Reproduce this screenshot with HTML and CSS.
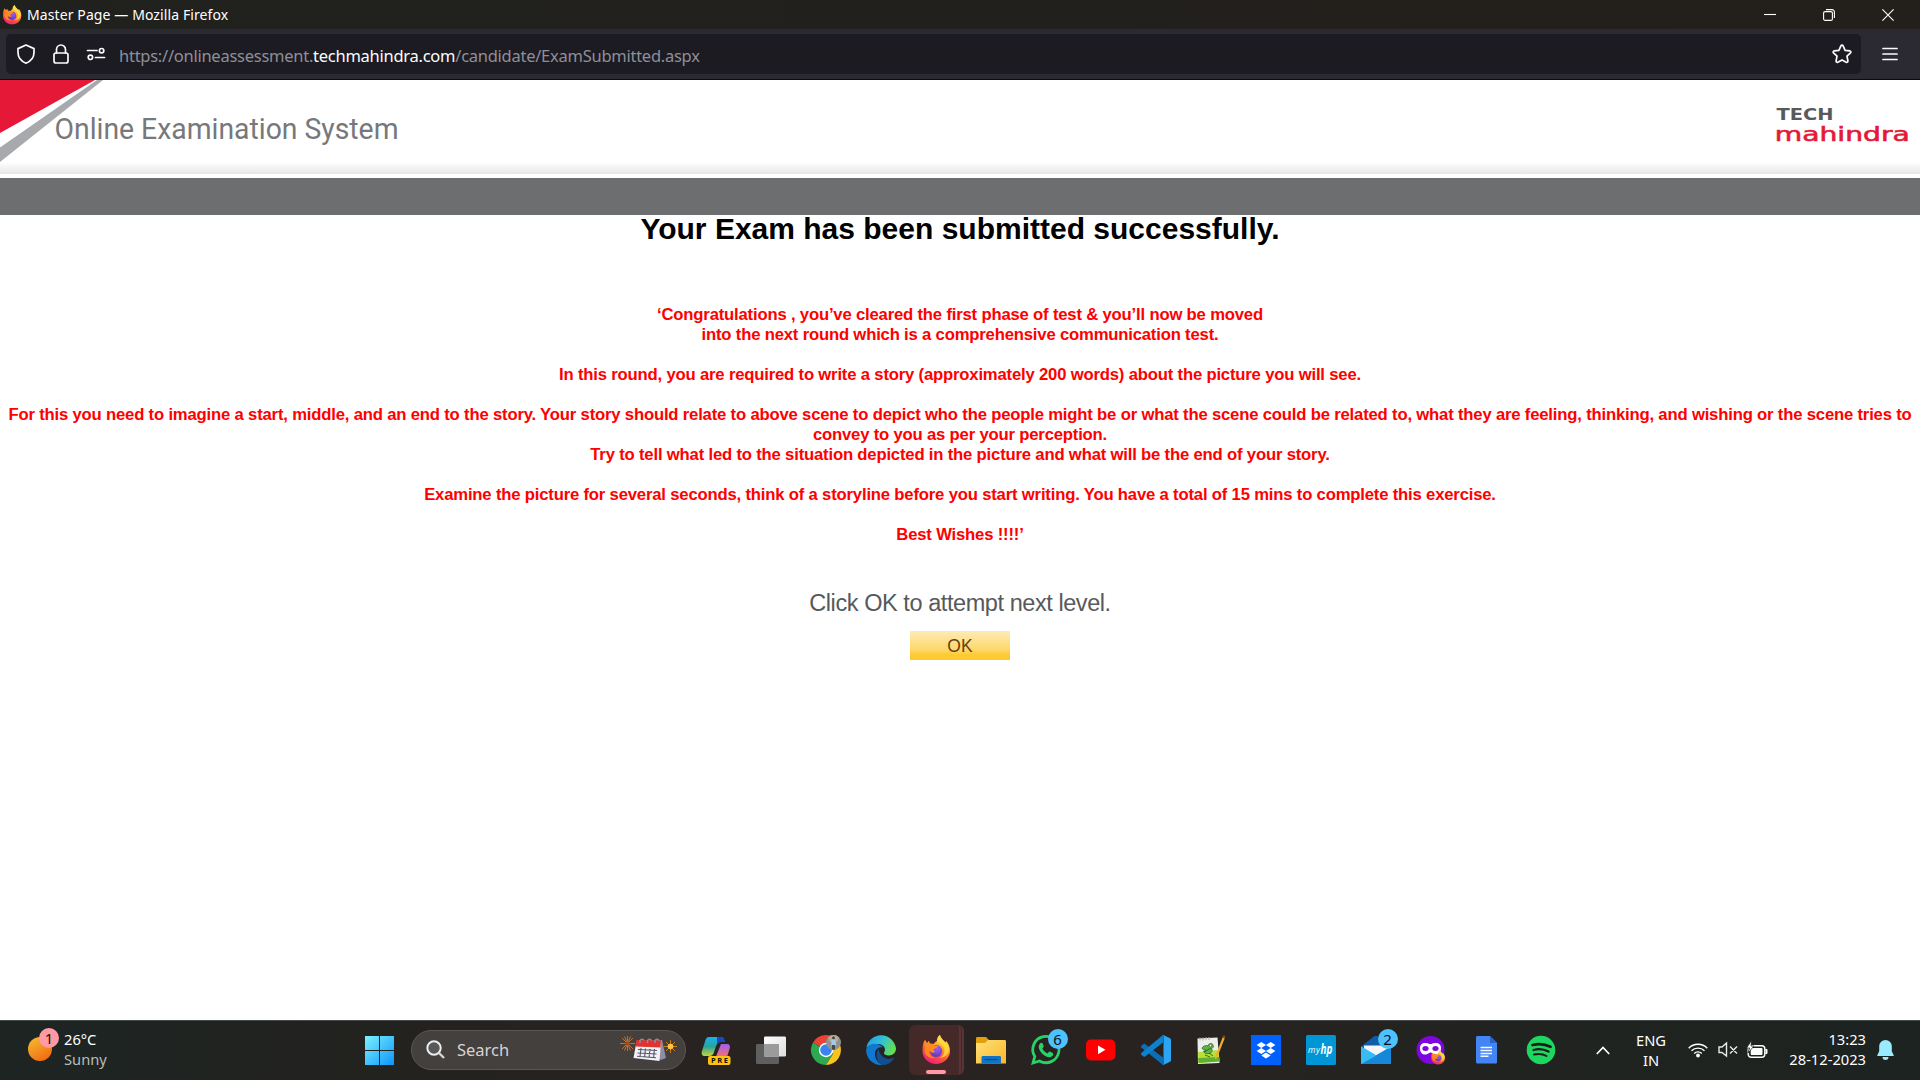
FILE: index.html
```html
<!DOCTYPE html>
<html lang="en">
<head>
<meta charset="utf-8">
<title>Master Page</title>
<link rel="stylesheet" href="styles.css">
</head>
<body>
<svg class="defs" width="0" height="0" aria-hidden="true">
  <defs>
    <linearGradient id="ffBody" x1=".8" y1="0" x2=".3" y2="1"><stop offset="0" stop-color="#fff04a"/><stop offset=".35" stop-color="#ffb028"/><stop offset=".65" stop-color="#ff5a36"/><stop offset="1" stop-color="#f0197d"/></linearGradient>
    <radialGradient id="ffGlobe" cx=".6" cy=".3" r=".8"><stop offset="0" stop-color="#a05cf5"/><stop offset="1" stop-color="#5135b8"/></radialGradient>
    <symbol id="firefox" viewBox="0 0 30 30">
      <path d="M15 29C7.500 29 1.500 23.200 1.500 16c0-4.800.5-8.600 2.500-11.200L6 8l2-2.200L9 9c1.500-.4 2.500-.4 3.700 0C13.500 7.500 14.800 6.500 16 6c0-2.500 1-4.800 3-6 .4 3.500 3.500 5 5.400 7.500l.8-1.500c2.700 3 3.800 6.500 3.800 10C29 23.200 22.500 29 15 29z" fill="url(#ffBody)"/>
      <circle cx="15.200" cy="16" r="6" fill="url(#ffGlobe)"/>
      <path d="M4.500 9.500c3.500-1.500 6.500-1 8.500.7 1.500.4 3 .5 4 .8-.4 1.800-2.700 2.300-4 3-.7 1.500.2 2.500 1.500 2.800-2 1.800-5.200 1-6-1.500C7.500 18.500 9.500 22 14 23c-6 1-10-3-10.500-7.500z" fill="#ff8a1f"/>
      <path d="M16 6c2.500 2 7.500 4.500 7.500 9.500 0 3.500-2 6-5 7.500 5.500-.5 9.500-4 9.500-9.500-.4-2.500-2-4.500-4-6.300C21.500 4.500 19.800 2.500 19 0c-2 1.200-3 3.500-3 6z" fill="#ffdd40" opacity=".8"/>
    </symbol>
  </defs>
</svg>

<header class="titlebar">
  <svg class="title-icon" width="20" height="20"><use href="#firefox"/></svg>
  <span class="title-text">Master Page — Mozilla Firefox</span>
  <div class="window-controls">
    <svg width="12" height="12" viewBox="0 0 12 12"><path d="M0 5.500h12"/></svg>
    <svg width="12" height="12" viewBox="0 0 12 12"><rect x=".6" y="2.600" width="8.800" height="8.800" rx="1.500"/><path d="M3 .6h6a2.400 2.400 0 0 1 2.400 2.400v6"/></svg>
    <svg width="12" height="12" viewBox="0 0 12 12"><path d="M.4.4l11.200 11.200M11.600.4.4 11.600"/></svg>
  </div>
</header>

<nav class="toolbar">
  <div class="urlbar">
    <svg class="shield" width="18" height="20" viewBox="0 0 18 20"><path d="M9 1l8 3.600v4C17 13.500 13.500 17.500 9 19.200 4.500 17.500 1 13.500 1 8.600v-4z"/></svg>
    <svg class="lock" width="16" height="20" viewBox="0 0 16 20"><rect x="1" y="9" width="14" height="10" rx="2"/><path d="M3.500 9V5.500a4.500 4.500 0 0 1 9 0V9"/></svg>
    <svg class="perms" width="18" height="12" viewBox="0 0 18 12"><path d="M.5 2.500H10M8.500 9.500h9"/><circle cx="14.600" cy="2.700" r="2.200"/><circle cx="3.400" cy="9.300" r="2.200"/></svg>
    <span class="url">https://onlineassessment.<b>techmahindra.com</b>/candidate/ExamSubmitted.aspx</span>
    <svg class="star" width="20" height="20" viewBox="0 0 20 20"><path d="M10 1.200c.5 0 .9.300 1.100.7l2 4.400 4.700.6c1 .1 1.400 1.300.7 2l-3.500 3.300.9 4.800c.2 1-.8 1.700-1.700 1.200L10 15.900l-4.200 2.300c-.9.500-1.900-.2-1.700-1.200l.9-4.800L1.500 8.900c-.7-.7-.3-1.900.7-2l4.700-.6 2-4.400c.2-.4.6-.7 1.100-.7z"/></svg>
  </div>
  <svg class="menu" width="16" height="14" viewBox="0 0 16 14"><path d="M1 1.500h14M1 7h14M1 12.500h14"/></svg>
</nav>

<main class="page">
  <div class="banner">
    <svg class="banner-left" width="420" height="94" viewBox="0 0 420 94">
      <path d="M0 0h95L0 53z" fill="#e51937"/>
      <path d="M97 0h6L0 82V67.500z" fill="#a7a9ac"/>
      <text class="system-name" x="54.500" y="58.500" textLength="344" lengthAdjust="spacingAndGlyphs">Online Examination System</text>
    </svg>
    <svg class="brand" width="150" height="94" viewBox="0 0 150 94">
      <text class="brand-top" x="6.500" y="39.500" textLength="57" lengthAdjust="spacingAndGlyphs">TECH</text>
      <text class="brand-bottom" x="4.800" y="61.300" textLength="135" lengthAdjust="spacingAndGlyphs">mahindra</text>
    </svg>
  </div>
  <div class="strip"></div>
  <h1>Your Exam has been submitted successfully.</h1>
  <div class="message">
    <p>‘Congratulations , you’ve cleared the first phase of test &amp; you’ll now be moved<br>into the next round which is a comprehensive communication test.</p>
    <p>In this round, you are required to write a story (approximately 200 words) about the picture you will see.</p>
    <p>For this you need to imagine a start, middle, and an end to the story. Your story should relate to above scene to depict who the people might be or what the scene could be related to, what they are feeling, thinking, and wishing or the scene tries to<br>convey to you as per your perception.<br>Try to tell what led to the situation depicted in the picture and what will be the end of your story.</p>
    <p>Examine the picture for several seconds, think of a storyline before you start writing. You have a total of 15 mins to complete this exercise.</p>
    <p>Best Wishes !!!!’</p>
  </div>
  <p class="prompt">Click OK to attempt next level.</p>
  <button class="ok" type="button">OK</button>
</main>

<footer class="taskbar">
  <div class="weather">
    <div class="sun"><span class="badge">1</span></div>
    <div class="weather-text">26°C<br><span class="dim">Sunny</span></div>
  </div>
  <svg class="start" width="30" height="30" viewBox="0 0 30 30">
    <defs><linearGradient id="win" x1="0" y1="0" x2="30" y2="30" gradientUnits="userSpaceOnUse"><stop offset="0" stop-color="#7df3ff"/><stop offset="1" stop-color="#0a93fb"/></linearGradient></defs>
    <path d="M0 1h14v14H0zM15 1h14v14H15zM0 16h14v14H0zM15 16h14v14H15z" fill="url(#win)"/>
  </svg>
  <div class="search">
    <svg width="20" height="20" viewBox="0 0 20 20"><circle cx="8" cy="8" r="6.700" fill="#5a5856" stroke="#e8eef2" stroke-width="2"/><path d="M13 13l5 5" stroke="#cfd6da" stroke-width="2.400"/></svg>
    <span class="search-text">Search</span>
    <svg class="festive" width="60" height="30" viewBox="0 0 60 30">
      <g stroke="#d9822f" stroke-width=".8"><path d="M8.500 1v15M1 8.500h15M3 3l11 11M14 3L3 14M5.500 1.500l6 14M11.500 1.500l-6 14"/></g>
      <circle cx="8.500" cy="8.500" r="2" fill="#a34722"/>
      <path d="M18 6l25-1 4 18-5 2z" fill="#8e8fa6"/><path d="M17.500 6.500L42 7l-1.500 19-26-3z" fill="#f1f1f7"/>
      <path d="M17.500 5L42 5.500l-.5 7-25-1z" fill="#e2322c"/>
      <path d="M19 14.500l19 1M18.500 18l19 1M18 21.200l19 1.500M22 13l-1 9M26.500 13.500l-1 9M31 14l-1 9M35.500 14l-1 9" stroke="#55566a" stroke-width="1.100" fill="none"/>
      <path d="M21 8V5.500a2.200 2.200 0 0 1 4 0M28.500 8V5.500a2.200 2.200 0 0 1 4 0M36 8V5.500a2.200 2.200 0 0 1 4 0" fill="none" stroke="#8a93b5" stroke-width="1.300"/>
      <g stroke="#d98222" stroke-width=".9"><path d="M51.500 5v13M45 11.500h13M47 7l9 9M56 7l-9 9"/></g><circle cx="51.500" cy="11.500" r="2.800" fill="#ffc93b"/>
    </svg>
  </div>

  <div class="apps">
    <div class="app">
      <svg width="30" height="30" viewBox="0 0 30 30">
        <defs><linearGradient id="cp1" x1="0" y1="0" x2="0" y2="1"><stop offset="0" stop-color="#15b5ef"/><stop offset=".5" stop-color="#2ba39e"/><stop offset="1" stop-color="#c5d637"/></linearGradient><linearGradient id="cp2" x1="0" y1="0" x2="0" y2="1"><stop offset="0" stop-color="#a45df1"/><stop offset="1" stop-color="#f5716d"/></linearGradient></defs>
        <path d="M8 2h12c2.500 0 3 2 3.700 5h-4c-3 0-4 2-5 5l-2 6c-.8 2-2 3-4 3H4c-3 0-4-2-3-5L4.500 5C5.200 3 6.200 2 8 2z" fill="url(#cp1)"/>
        <path d="M16 2h4c2.500 0 3 2 3.700 5h-4c-2 0-3 1-3.700 2z" fill="#1748c8"/>
        <path d="M20 9h6c2.500 0 3.500 2 2.700 4.500L26 22H13c2 0 2.500-1 3-3z" fill="url(#cp2)"/>
        <rect x="7" y="21" width="22.500" height="9" rx="2" fill="#ffc20e"/>
        <text class="pre" x="10" y="28.200" textLength="17">PRE</text>
      </svg>
    </div>
    <div class="app">
      <svg width="30" height="30" viewBox="0 0 30 30"><defs><linearGradient id="tv" x1="0" y1="0" x2="1" y2="1"><stop offset="0" stop-color="#fff"/><stop offset="1" stop-color="#ddd"/></linearGradient></defs><rect x="0" y="9" width="23" height="20" rx="1.300" fill="#5f5f5f"/><rect x="8" y="1.500" width="22" height="20" rx="1.300" fill="url(#tv)"/><path d="M8 9h15v12.500H8z" fill="#9b9b9b"/></svg>
    </div>
    <div class="app">
      <svg width="30" height="30" viewBox="0 0 30 30">
        <path d="M15 15L2 7.500A15 15 0 0 1 28 7.500z" fill="#ea4335"/><path d="M15 15h-1L2 7.500A15 15 0 0 0 15 30l7-11z" fill="#2da94f"/><path d="M15 8h13.200A15 15 0 0 1 15 30l7-11z" fill="#fcc31e"/>
        <circle cx="15" cy="15" r="7.200" fill="#fff"/><circle cx="15" cy="15" r="5.800" fill="#3b82f0"/>
        <circle cx="22.500" cy="7.500" r="7.500" fill="#8d9490"/><path d="M17 2.500a7.500 7.500 0 0 1 11 0L26 7h-7z" fill="#b3ab98"/><path d="M20.500 5.500l2-3 2 3 .7 5h-5z" fill="#a9c9e6"/><path d="M21 10h3v4.700h-3z" fill="#454a55"/><circle cx="22.500" cy="3" r="1.400" fill="#493a35"/>
      </svg>
    </div>
    <div class="app">
      <svg width="30" height="30" viewBox="0 0 30 30">
        <defs><linearGradient id="ed1" x1="0" y1=".2" x2="1" y2=".5"><stop offset="0" stop-color="#249fe0"/><stop offset=".5" stop-color="#2fc1d8"/><stop offset="1" stop-color="#66e04a"/></linearGradient></defs>
        <path d="M.3 13A15 15 0 0 1 30 13.500c0 4-3 7-7.200 7-3 0-4.800-1-4.800-2.500 0-1 1-1.400 1-3.500 0-3-3-5.500-7-5.500C6 9 2 11 .3 13z" fill="url(#ed1)"/>
        <path d="M.1 14.500C1.500 10.500 6.500 8 11 9c3 .6 5 2 6 3.500-4-1-8 1.500-8 6.500 0 5 3 9.500 8 10.800C7.500 31 0 24 .1 14.500z" fill="#0f78d0"/>
        <path d="M12.500 14c-4 5-1.500 15.500 5 16 5-.3 9-3.500 11-7.500-5.500 3-14 1.500-16-8.500z" fill="#114f93"/>
      </svg>
    </div>
    <div class="app active"><svg width="30" height="30"><use href="#firefox"/></svg></div>
    <div class="app">
      <svg width="30" height="30" viewBox="0 0 30 30"><defs><linearGradient id="fo" x1="0" y1="0" x2="1" y2="1"><stop offset="0" stop-color="#ffe07a"/><stop offset="1" stop-color="#f9b826"/></linearGradient></defs><path d="M0 3.500C0 2.500.7 2 1.500 2H10l3 3-3 4H0z" fill="#dfa00e"/><path d="M0 8h9l3-3h16.500c1 0 1.500.5 1.500 1.500V28.500H0z" fill="url(#fo)"/><path d="M5.500 28.500v-6c0-1 .6-1.500 1.500-1.500h16.500c1 0 1.500.6 1.500 1.500v6z" fill="#1173c4"/><path d="M8.500 24.500h13" stroke="#0a4a8b" stroke-width="1.200"/></svg>
    </div>
    <div class="app">
      <svg width="30" height="30" viewBox="0 0 30 30"><path d="M2 28l1.800-6.500A13.100 13.100 0 1 1 8.500 26z" fill="none" stroke="#25d366" stroke-width="2.800"/><path d="M9 8.500c1-1 2.300-.8 2.700.1l1 2.500c.2.700-.2 1.200-1.300 2.300 1 2.300 2.700 4 5.200 5 1.500-1.800 1.800-2 2.600-1.700l2.500 1.200c.8.400.7 2-.3 3-3.300 3-9 .2-12-4.300-2-3-2.300-6-.4-8.100z" fill="#25d366"/></svg>
      <span class="badge">6</span>
    </div>
    <div class="app">
      <svg width="30" height="30" viewBox="0 0 30 30"><rect y="4.500" width="29.500" height="21" rx="5" fill="#f00"/><path d="M12 10.500l7.500 4.300-7.500 4.400z" fill="#fff"/></svg>
    </div>
    <div class="app">
      <svg width="30" height="30" viewBox="0 0 30 30"><path d="M0 11l2.500-2c.5-.3 1-.3 1.500 0L22 22.500V30L.3 12.500C-.2 12-.2 11.500 0 11z" fill="#0b6fb8"/><path d="M0 19.500c-.2-.5-.2-1 .3-1.500L22 0v7.500L4 21.500c-.5.300-1 .3-1.500 0z" fill="#0b83d0"/><path d="M21 .5c.5-.5 1-.6 1.800-.3l5.800 2.700c1 .5 1.400 1 1.400 2v20.200c0 1-.4 1.500-1.400 2l-5.800 2.700c-.8.300-1.300.2-1.800-.3.700.5 1.500 0 1.500-.8V1.300c0-.8-.8-1.300-1.500-.8z" fill="#2ba4f3"/></svg>
    </div>
    <div class="app">
      <svg width="30" height="30" viewBox="0 0 30 30"><path d="M1.500 3.500l20-1L23.500 28l-21.500 1z" fill="#ecefe9"/><path d="M2 17l20.500-2 1 11-21 2z" fill="#b9e03a"/><path d="M2.200 23l21-1 .3 4.500-21 1.500z" fill="#5fb02a"/><path d="M6 13c1-2 4-3 6-2 0-2.500 4-3.500 5-1 1 2 0 3-1.500 3.500 1.500 2 .5 4-2 5-3 .5-5 0-6-2l2.500-1.500c-2 0-4-.5-4-2z" fill="#5ab840" stroke="#2c6023" stroke-width=".7"/><path d="M8 17l7-4M9 20l5 2M13 18l4 3" stroke="#2f5a24" stroke-width=".9"/><circle cx="14.500" cy="10.500" r="1.300" fill="#fff" stroke="#222" stroke-width=".5"/><path d="M4 2.500v3M7 2.500v3M10 2v3M13 2v3" stroke="#aaa"/><path d="M27 1.500l2 1L21 23l-2 1.500V22z" fill="#f4ad2b"/><path d="M27.500 0l2 1-.8 2.500-2-1z" fill="#8e3b26"/></svg>
    </div>
    <div class="app">
      <svg width="30" height="30" viewBox="0 0 30 30"><path d="M0 0h30v30H0z" fill="#0061fe"/><path d="M10.300 7l4.700 3-4.700 3-4.700-3zM19.700 7l4.700 3-4.700 3-4.700-3zM10.300 13l4.700 3-4.700 3-4.700-3zM19.700 13l4.700 3-4.700 3-4.700-3zM15 17.500l4.700 3-4.700 3-4.700-3z" fill="#fff"/></svg>
    </div>
    <div class="app">
      <svg width="30" height="30" viewBox="0 0 30 30"><rect width="30" height="30" rx="1.500" fill="#0096d6"/><text class="my" x="2" y="17.500" textLength="12">my</text><text class="hp" x="14.500" y="19" textLength="12" lengthAdjust="spacingAndGlyphs">hp</text></svg>
    </div>
    <div class="app">
      <svg width="30" height="30" viewBox="0 0 30 30"><path d="M0 11.500L13.500 1h3L30 11.500 15 22z" fill="#0f5ba8"/><path d="M3 10.500h24V18L15 25 3 16z" fill="#f3f5f8"/><path d="M0 11.500L30 29H0z" fill="#2fb5ee"/><path d="M0 29L30 11.500V29z" fill="#1688d8"/><path d="M0 11.500l15.300 9L0 29z" fill="#36bcf2"/></svg>
      <span class="badge">2</span>
    </div>
    <div class="app">
      <svg width="30" height="30" viewBox="0 0 30 30"><circle cx="14.500" cy="15" r="14" fill="#7f06de"/><path d="M4 13c0-4 3-5.500 6-5 2 .3 3 1 4.500 1s2.500-.7 4.500-1c3-.5 6 1 6 5 0 5-3 7-6 6.500-2-.3-3-2-4.500-2s-2.500 1.700-4.500 2c-3 .5-6-1.500-6-6.500z" fill="#fff"/><ellipse cx="9.500" cy="13.500" rx="3.100" ry="2.500" fill="#7f06de"/><ellipse cx="19.500" cy="13.500" rx="3.100" ry="2.500" fill="#7f06de"/><use href="#firefox" x="14.500" y="15" width="15" height="15"/></svg>
    </div>
    <div class="app">
      <svg width="30" height="30" viewBox="0 0 30 30"><path d="M6.500 1h12.500l7 7v19c0 1-.7 1.500-1.500 1.500h-18c-.9 0-1.500-.6-1.500-1.500V2.500C5 1.600 5.600 1 6.500 1z" fill="#4385f4"/><path d="M19 1l7 7h-7z" fill="#2a62c9"/><path d="M9.500 12.500h11.500M9.500 15.500h11.500M9.500 18.500h11.500M9.500 21.300h8" stroke="#f3f6fd" stroke-width="1.500"/></svg>
    </div>
    <div class="app">
      <svg width="30" height="30" viewBox="0 0 30 30"><circle cx="15" cy="15" r="14.300" fill="#1ed760"/><g fill="none" stroke="#1b1d1b" stroke-linecap="round"><path d="M6.500 10c6-1.600 12.500-1 18 1.800" stroke-width="2.700"/><path d="M7.500 15c5-1.400 10.500-.8 15 1.600" stroke-width="2.300"/><path d="M8 19.500c4.500-1 9-.6 12.500 1.500" stroke-width="1.900"/></g></svg>
    </div>
  </div>

  <div class="tray">
    <svg class="chevron" width="14" height="9" viewBox="0 0 14 9"><path d="M.8 8L7 1.500 13.200 8" fill="none" stroke="#fff" stroke-width="1.700"/></svg>
    <div class="lang">ENG<br>IN</div>
    <svg class="wifi" width="20" height="16" viewBox="0 0 20 16"><g fill="none" stroke="#fff" stroke-width="1.400"><path d="M.7 6.200a13 13 0 0 1 18.600 0M3.500 8.800a9.200 9.200 0 0 1 13 0M6.200 11.400a5.400 5.400 0 0 1 7.600 0"/></g><circle cx="10" cy="13.500" r="1.900" fill="#fff"/></svg>
    <svg class="speaker" width="20" height="16" viewBox="0 0 20 16"><path d="M1 5h3l4.500-4v13L4 10.500H1zM12 4.500l7 7M19 4.500l-7 7" fill="none" stroke="#e8e8e8" stroke-width="1.400"/></svg>
    <svg class="battery" width="22" height="18" viewBox="0 0 22 18"><rect x="1.200" y="4.700" width="16.600" height="11.600" rx="3" fill="none" stroke="#fff" stroke-width="1.400"/><rect x="3.700" y="7" width="11.800" height="7" rx="1" fill="#fff"/><path d="M18.500 8.500H20v4h-1.500" fill="#fff" stroke="#fff"/><path d="M4.500-.5L-.5 7h3L1 12l6-7H4z" fill="#fff" stroke="#1d2321" stroke-width=".8"/></svg>
    <div class="clock">13:23<br>28-12-2023</div>
    <svg class="bell" width="17" height="20" viewBox="0 0 17 20"><path d="M8.500 0a6.300 6.300 0 0 1 6.300 6.300v5l1.900 4V16H.3v-.7l1.900-4v-5A6.300 6.300 0 0 1 8.500 0zM5.500 17h6a3 3 0 0 1-6 0z" fill="#99ebff"/></svg>
  </div>
</footer>
</body>
</html>
```

FILE: styles.css
```css
* { box-sizing: border-box; }
body { margin: 0; width: 1920px; height: 1080px; overflow: hidden; display: flex; flex-direction: column; background: #fff; font-family: "Noto Sans", sans-serif; }
svg { display: block; flex: none; overflow: visible; }
.defs { position: absolute; }
p, h1 { margin: 0; }

.titlebar { height: 29px; flex: none; display: flex; align-items: center; padding: 0 26px 0 2px; background: linear-gradient(90deg, #20211e, #231f1b); color: #fff; font-size: 14px; }
.title-icon { margin-right: 5px; }
.title-text { white-space: nowrap; letter-spacing: 0.100px; }
.window-controls { margin-left: auto; display: flex; gap: 47px; }
.window-controls svg { fill: none; stroke: #fff; stroke-width: 1.100; }

.toolbar { height: 51px; flex: none; display: flex; align-items: center; background: #2b2a33; border-bottom: 1px solid #0c0c0d; padding-left: 6px; }
.urlbar { width: 1855px; height: 40px; border-radius: 5px; background: #1c1b22; display: flex; align-items: center; padding: 0 9px 0 11px; }
.toolbar svg { fill: none; stroke: #fbfbfe; stroke-width: 1.700; stroke-linejoin: round; stroke-linecap: round; }
.lock { margin-left: 18px; }
.perms { margin-left: 18px; }
.url { margin-left: 14px; padding-top: 3px; font-size: 16.500px; letter-spacing: -0.260px; color: #8f8f98; white-space: nowrap; }
.url b { font-weight: 400; color: #fbfbfe; }
.star { margin-left: auto; }
.menu { margin-left: 21px; }

.page { flex: none; height: 940px; display: flex; flex-direction: column; align-items: center; font-family: "Liberation Sans", Arial, sans-serif; }
.banner { width: 100%; height: 94px; flex: none; display: flex; justify-content: space-between; background: linear-gradient(180deg, #fff 82px, #e6e6e6 94px); }
.system-name { font-family: Roboto, sans-serif; font-size: 29px; fill: #77787b; }
.brand-top { font-family: "DejaVu Sans", sans-serif; font-weight: 700; font-size: 16.500px; fill: #58595b; }
.brand-bottom { font-family: "DejaVu Sans", sans-serif; font-size: 20px; fill: #e51937; stroke: #e51937; stroke-width: 0.600px; }
.strip { width: 100%; height: 37px; flex: none; margin-top: 4px; background: #6d6e70; }
h1 { font-size: 30px; line-height: 34px; margin-top: -3px; color: #000; white-space: nowrap; }
.message { margin-top: 59px; display: flex; flex-direction: column; gap: 20px; text-align: center; font-weight: 700; font-size: 16.670px; letter-spacing: -0.180px; line-height: 20px; color: #f00; white-space: nowrap; }
.prompt { margin-top: 44px; font-size: 23.500px; letter-spacing: -0.430px; line-height: 28px; color: #58595b; }
.ok { margin-top: 14px; width: 100px; height: 29px; padding: 1px 0 0; border: 0; background: linear-gradient(180deg, #fdebb8 0%, #fdd868 65%, #fccb33 82%, #fccb33 100%); color: #6b3d0c; font: 17.500px "Liberation Sans", Arial, sans-serif; }

.taskbar { height: 60px; flex: none; display: flex; align-items: center; position: relative; padding-bottom: 1px; background: linear-gradient(90deg, #1d2523 0%, #22221f 18%, #282320 35%, #282320 62%, #202320 82%, #1d2321 100%); border-top: 1px solid #444a47; color: #fff; font-size: 14.700px; line-height: 20px; }
.weather { display: flex; align-items: center; margin-left: 28px; width: 337px; gap: 12px; }
.weather-text { padding-bottom: 3px; }
.sun { position: relative; width: 24px; height: 24px; border-radius: 50%; background: linear-gradient(150deg, #f5bf35, #f0600a); margin-top: -3px; }
.badge { position: absolute; right: 0; top: 0; width: 20px; height: 20px; border-radius: 50%; background: #4cc2ff; color: #111; font-size: 15px; line-height: 20px; text-align: center; }
.sun .badge { left: 11px; top: -9px; background: #ff99a4; }
.dim { color: #b9bcba; }
.search { width: 275px; height: 40px; margin-left: 16px; border-radius: 20px; background: #43403e; border: 1px solid #5b5654; display: flex; align-items: center; padding: 0 6px 0 14px; }
.search-text { margin-left: 11px; font-size: 16.500px; color: #d6d4d3; }
.festive { margin-left: auto; }
.apps { display: flex; margin-left: 2.500px; }
.app { width: 55px; height: 58px; display: grid; place-items: center; position: relative; }
.app .badge { right: 6px; top: 8px; }
.active::before { content: ""; grid-area: 1 / 1; width: 50px; height: 50px; border-radius: 6px; background: #452828; border-right: 5px double #5a3434; }
.active svg { grid-area: 1 / 1; z-index: 1; }
.active::after { content: ""; position: absolute; left: 17.500px; bottom: 5px; width: 20px; height: 4px; border-radius: 2px; background: #ff99a4; }
.pre { font: 700 7.500px "Open Sans", sans-serif; fill: #111; }
.my { font: italic 8.500px "Open Sans", sans-serif; fill: #fff; }
.hp { font: italic 700 14px "Open Sans", sans-serif; fill: #fff; }
.tray { position: absolute; inset: 0 0 1px 1596px; display: flex; align-items: center; }
.lang { width: 40px; margin-left: 21px; padding-bottom: 1px; text-align: center; }
.wifi { margin-left: 17px; }
.speaker { margin-left: 10px; }
.battery { margin-left: 9px; }
.clock { width: 97px; padding-bottom: 3px; text-align: right; white-space: nowrap; }
.bell { margin-left: 11px; }
```
